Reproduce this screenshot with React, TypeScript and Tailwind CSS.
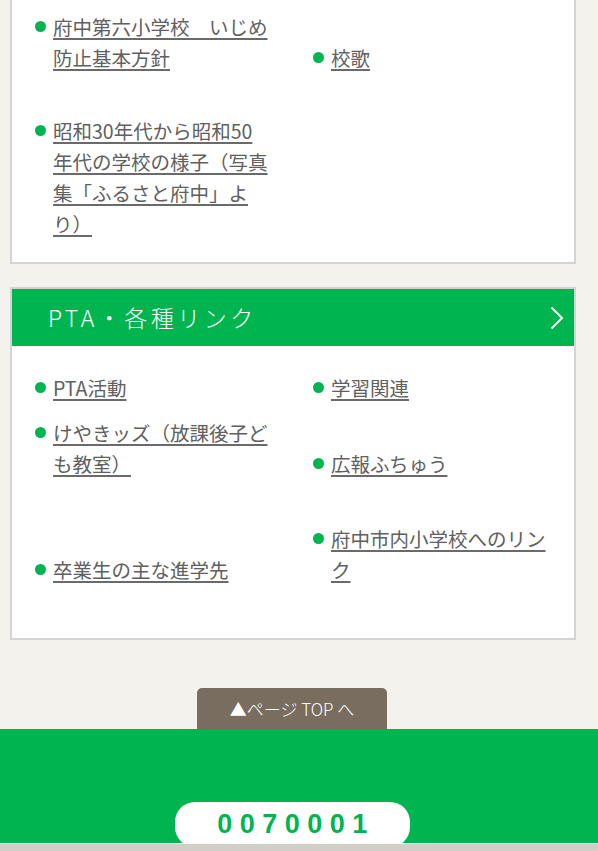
import React from "react";

const GREEN = "bg-[#00b450]";

function Item({ text }: { text: string }) {
  return (
    <div className="flex items-start">
      <span className="mt-[10px] mr-[7px] h-[11px] w-[11px] shrink-0 rounded-full bg-[#00b450]" />
      <a
        href="#"
        className="w-[216px] text-[19.5px] leading-[31px] text-[#606060] underline decoration-[#6a6a6a] decoration-[1.5px] underline-offset-[3px]"
      >
        {text}
      </a>
    </div>
  );
}

function Row({ left, right, className = "" }: { left: string; right?: string; className?: string }) {
  return (
    <div className={`grid grid-cols-[278px_1fr] items-end ${className}`}>
      <Item text={left} />
      {right ? <Item text={right} /> : <div />}
    </div>
  );
}

export default function App() {
  return (
    <div className="min-h-[851px] bg-[#f4f2ed] font-['Noto_Sans_CJK_JP','Noto_Sans',sans-serif]">
      {/* Card 1 (top cut off) */}
      <div className="mx-[10px] w-[566px] border-x-2 border-b-2 border-[#d4d4d4] bg-white pt-[11px] pb-[23px] pl-[23px]">
        <Row left="府中第六小学校　いじめ防止基本方針" right="校歌" />
        <Row className="mt-[42px]" left="昭和30年代から昭和50年代の学校の様子（写真集「ふるさと府中」より）" />
      </div>

      {/* Card 2 */}
      <div className="mx-[10px] mt-[23px] w-[566px] border-2 border-[#d4d4d4] bg-white">
        <div className={`flex h-[57px] items-center justify-between ${GREEN} pl-[36px] pr-[10px]`}>
          <span className="text-[23px] font-light leading-none tracking-[3.5px] text-white">PTA・各種リンク</span>
          <svg width="14" height="24" viewBox="0 0 14 24" className="block">
            <polyline points="1.5,1.5 12,12 1.5,22.5" fill="none" stroke="white" strokeWidth="2" />
          </svg>
        </div>
        <div className="pt-[26px] pb-[53px] pl-[23px]">
          <Row left="PTA活動" right="学習関連" />
          <Row className="mt-[14px]" left="けやきッズ（放課後子ども教室）" right="広報ふちゅう" />
          <Row className="mt-[44px]" left="卒業生の主な進学先" right="府中市内小学校へのリンク" />
        </div>
      </div>

      {/* Page top button */}
      <div className="mt-[48px] ml-[197px] flex h-[41px] w-[190px] items-center justify-center rounded-t-[5px] bg-[#786d5f]">
        <span className="text-[17px] font-light leading-none text-white">▲ページ TOP へ</span>
      </div>

      {/* Footer */}
      <div className={`relative h-[114px] overflow-hidden ${GREEN}`}>
        <div className="absolute top-[73px] left-[175px] flex h-[45px] w-[235px] items-center justify-center rounded-[20px] bg-white">
          <span className="pl-[7px] font-['Liberation_Sans',Arial,sans-serif] text-[27px] font-bold leading-none tracking-[7.5px] text-[#00b450]">
            0070001
          </span>
        </div>
      </div>
      <div className="h-[1px] bg-[#f8f8f6]" />
      <div className="h-[7px] bg-[#d3cfc7]" />
    </div>
  );
}
